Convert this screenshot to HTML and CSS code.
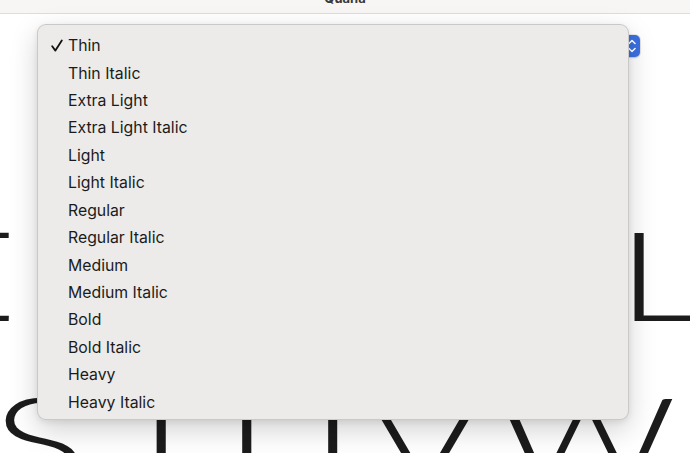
FILE: index.html
```html
<!DOCTYPE html>
<html>
<head>
<meta charset="utf-8">
<link rel="stylesheet" href="styles.css">
</head>
<body>
<div class="window">
  <header class="titlebar"><span class="title">Quana</span></header>
  <div class="toolbar">
    <div class="stepper">
      <svg width="16" height="22" viewBox="0 0 16 22"><path d="M5 8.5 L8 5.5 L11 8.5 M5 13.5 L8 16.5 L11 13.5" fill="none" stroke="#fff" stroke-width="1.6" stroke-linecap="round" stroke-linejoin="round"/></svg>
    </div>
  </div>
  <div class="specimen">
    <div class="line line-1"><span class="lead">E</span>FGHIJKLMN</div>
    <div class="line line-2"><span class="lead">S</span>TUVWXYZ</div>
  </div>
  <ul class="menu">
    <li class="item checked"><svg class="check" width="12" height="13" viewBox="0 0 12 13"><path d="M1.2 7.2 L4.4 11.6 L10.8 1.4" fill="none" stroke="#111" stroke-width="1.8" stroke-linecap="round" stroke-linejoin="round"/></svg>Thin</li>
    <li class="item">Thin Italic</li>
    <li class="item">Extra Light</li>
    <li class="item">Extra Light Italic</li>
    <li class="item">Light</li>
    <li class="item">Light Italic</li>
    <li class="item">Regular</li>
    <li class="item">Regular Italic</li>
    <li class="item">Medium</li>
    <li class="item">Medium Italic</li>
    <li class="item">Bold</li>
    <li class="item">Bold Italic</li>
    <li class="item">Heavy</li>
    <li class="item">Heavy Italic</li>
  </ul>
</div>
</body>
</html>
```
FILE: styles.css
```css
* { box-sizing: border-box; }
html, body { margin: 0; padding: 0; }
body {
  width: 690px;
  height: 453px;
  overflow: hidden;
  background: #ffffff;
  font-family: "Inter", "Liberation Sans", sans-serif;
}
.window {
  position: relative;
  width: 690px;
  height: 453px;
  overflow: hidden;
  background: #ffffff;
}
.titlebar {
  height: 14px;
  background: #f7f6f5;
  border-bottom: 1px solid #dedddc;
  display: flex;
  justify-content: center;
  overflow: hidden;
}
.title {
  font-size: 13px;
  font-weight: 700;
  line-height: 13px;
  margin-top: -8px;
  color: #3a3a3a;
}
.toolbar {
  display: flex;
  justify-content: flex-end;
  padding: 21px 50px 0 0;
  height: 43px;
}
.stepper {
  width: 16px;
  height: 22px;
  border-radius: 5px;
  background: #3b70e2;
  box-shadow: 0 0 0 1px rgba(0,0,0,0.08), 0 1px 2px rgba(0,0,0,0.15);
  display: flex;
}
.specimen {
  padding-top: 133px;
  font-family: "Lato", "Inter", sans-serif;
  font-weight: 300;
  color: #1c1c1c;
}
.line {
  white-space: nowrap;
  font-size: 124px;
  line-height: 166px;
  transform: scaleX(1.43);
  transform-origin: 0 0;
}
.line-1 { margin-left: -85px; letter-spacing: -2px; }
.line-1 .lead { letter-spacing: 14px; }
.line-2 { margin-left: -8px; letter-spacing: 9px; }
.line-2 .lead { letter-spacing: 16px; }
.menu {
  position: absolute;
  left: 37px;
  top: 24px;
  width: 592px;
  height: 396px;
  margin: 0;
  padding: 7px 0 5px;
  list-style: none;
  background: #ecebea;
  border: 1px solid rgba(0,0,0,0.14);
  border-radius: 9px;
  box-shadow: 0 10px 28px rgba(0,0,0,0.18), 0 2px 6px rgba(0,0,0,0.08);
}
.item {
  position: relative;
  height: 27.43px;
  display: flex;
  align-items: center;
  padding-left: 30px;
  font-size: 15.8px;
  color: #1b1b1b;
}
.check {
  position: absolute;
  left: 13px;
  top: 7px;
}
```
